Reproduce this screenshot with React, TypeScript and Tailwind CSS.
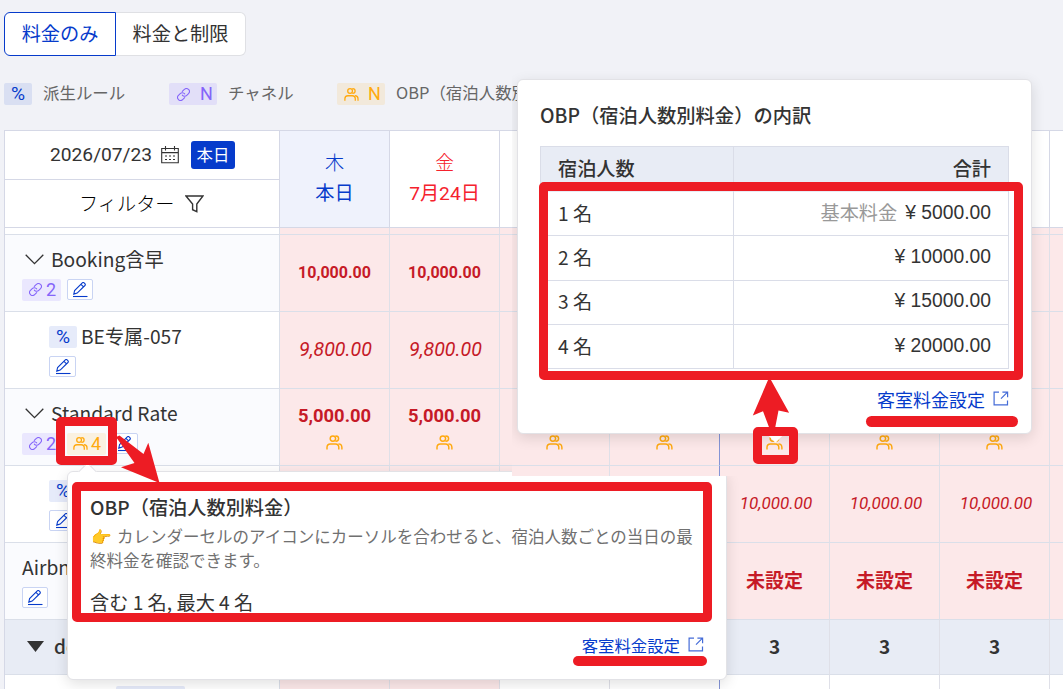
import type { ReactNode } from "react";
import { clsx } from "clsx";

const ROBOTO = "font-[Roboto,'Noto_Sans_CJK_JP',sans-serif]";

function PeopleIcon({ className = "w-[17px]" }: { className?: string }) {
  return (
    <svg height="15" viewBox="0 0 17 15" fill="none" stroke="currentColor" strokeWidth="1.45" className={clsx("shrink-0", className)}>
      <circle cx="6.9" cy="3.6" r="2.7" />
      <path d="M9.4 0.9h.5a2.7 2.7 0 0 1 0 5.4h-.5" />
      <path d="M1 14.6v-2.4a3.4 3.4 0 0 1 3.4-3.3h5a3.4 3.4 0 0 1 3.4 3.3v2.4" />
      <path d="M12.4 8.9a3.6 3.6 0 0 1 3.5 3.5v2.2" />
    </svg>
  );
}

function LinkIcon() {
  return (
    <svg width="13" height="13" viewBox="1 1 22 22" fill="none" stroke="currentColor" strokeWidth="1.8" strokeLinecap="round" className="shrink-0">
      <path d="M10 13a5 5 0 0 0 7.54.54l3-3a5 5 0 0 0-7.07-7.07l-3.5 3.4" />
      <path d="M14 11a5 5 0 0 0-7.54-.54l-3 3a5 5 0 0 0 7.07 7.07l3.5-3.4" />
    </svg>
  );
}

function ExternalIcon() {
  return (
    <svg width="16" height="16" viewBox="0 0 16 16" fill="none" stroke="currentColor" strokeWidth="1.2" className="opacity-75">
      <path d="M6 1.1H1.1v12.8h13.4V9.5" />
      <path d="M9.4 1.1h5.200v5.200M14.5 1.2L8 7.7" />
    </svg>
  );
}

function Chevron() {
  return (
    <svg width="19" height="11" viewBox="0 0 19 11" fill="none" stroke="#333" strokeWidth="1.3">
      <path d="M0.7 0.8L9.5 9.7l8.8-8.9" />
    </svg>
  );
}

function EditButton({ className = "w-[26px]" }: { className?: string }) {
  return (
    <span className={clsx("flex h-[21px] shrink-0 items-center justify-center rounded-[2px] border border-[#c9d4f3] bg-white text-[#063bcb]", className)}>
      <svg width="16" height="16" viewBox="0 0 16 16" fill="none" stroke="currentColor" strokeWidth="1.1">
        <path d="M1.8 12.1l.8-3.6L10.3 0.9a1.3 1.3 0 0 1 1.8 0l.8.8a1.3 1.3 0 0 1 0 1.8L5.200 11.1zM9 2.3l2.5 2.5" />
        <path d="M1 14.5h14.5" />
      </svg>
    </span>
  );
}

function PercentBadge() {
  return (
    <span className={clsx("flex h-[22px] w-7 shrink-0 items-center justify-center rounded-[2px] bg-[#063bcb]/10 text-[19.2px] text-[#063bcb]", ROBOTO)}>
      %
    </span>
  );
}

function ChannelBadge({ label, wide }: { label: string; wide?: boolean }) {
  return (
    <span
      className={clsx(
        "flex h-[22px] shrink-0 items-center rounded-[2px] bg-[#7b5cff]/12 text-[18px] leading-5 text-[#8464fa]",
        ROBOTO,
        wide ? "w-12 gap-[10px] pl-2" : "w-[39px] gap-1 pb-px pl-[7px]",
      )}
    >
      <LinkIcon />
      {label}
    </span>
  );
}

function ObpBadge({ label, wide }: { label: string; wide?: boolean }) {
  return (
    <span
      className={clsx(
        "flex h-[22px] shrink-0 items-center rounded-[2px] bg-[#ffaa0f]/12 text-[18px] leading-5 text-[#ffa90f]",
        ROBOTO,
        wide ? "w-12 gap-[9px] pl-[7px]" : "w-[39px] gap-[3px] pb-px pl-[6px]",
      )}
    >
      <PeopleIcon className="w-[15px]" />
      {label}
    </span>
  );
}

const COLUMNS = [0, 1, 2, 3, 4, 5, 6, 7];
const LAST_COLUMN = 7;

function Cells({ className, children }: { className: string; children?: ReactNode }) {
  return (
    <>
      {COLUMNS.map((col) => (
        <div
          key={col}
          className={clsx(
            "flex w-[110px] shrink-0 flex-col items-center border-r border-b border-b-[#dadfe9]",
            col === 3 ? "border-r-[#8494d6]" : "border-r-[#dfe0e8]",
            className,
          )}
        >
          {col < LAST_COLUMN && children}
        </div>
      ))}
    </>
  );
}

function Row({ label, labelClass, cellClass, height = "h-[77px]", children }: {
  label?: ReactNode;
  labelClass?: string;
  cellClass: string;
  height?: string;
  children?: ReactNode;
}) {
  return (
    <div className={clsx("flex", height)}>
      <div className={clsx("w-[275px] shrink-0 border-r border-b border-[#dadfe9]", labelClass)}>{label}</div>
      <Cells className={cellClass}>{children}</Cells>
    </div>
  );
}

function ParentLabel({ name, guests }: { name: string; guests?: string }) {
  return (
    <div className="pt-[10px] pl-[17px]">
      <div className="flex h-7 items-center gap-[7px] pl-[3px] text-[19.2px]">
        <Chevron />
        {name}
      </div>
      <div className="mt-[6px] flex items-start gap-[6px]">
        <ChannelBadge label="2" />
        {guests && <ObpBadge label={guests} />}
        <EditButton />
      </div>
    </div>
  );
}

function ChildLabel({ name }: { name: string }) {
  return (
    <div className="pt-[11px] pl-11">
      <div className="flex h-7 items-center gap-1 text-[19.2px]">
        <PercentBadge />
        <span className="-mt-[2px]">{name}</span>
      </div>
      <EditButton className="mt-[5px] w-[27px]" />
    </div>
  );
}

const DAYS = [
  { week: "木", date: "本日", color: "bg-[#eff2fc] text-[#063bcb]" },
  { week: "金", date: "7月24日", color: "bg-white text-[#f5222d]" },
  { week: "土", date: "7月25日", color: "bg-white text-[#f5222d]" },
  { week: "日", date: "7月26日", color: "bg-white text-[#f5222d]" },
  { week: "月", date: "7月27日", color: "bg-white text-[#333]" },
  { week: "火", date: "7月28日", color: "bg-white text-[#333]" },
  { week: "水", date: "7月29日", color: "bg-white text-[#333]" },
  { week: "", date: "", color: "bg-white" },
];

function TableHeader() {
  return (
    <div className="flex h-[97px]">
      <div className="w-[275px] shrink-0 border-r border-b border-[#d5d8e6] bg-white">
        <div className="flex h-[49px] items-center border-b border-[#d5d8e6] pl-[45px]">
          <span className={clsx("w-[111px] text-[19.2px]", ROBOTO)}>2026/07/23</span>
          <svg width="18" height="18" viewBox="0 0 18 18" fill="none" stroke="#333" strokeWidth="1.1">
            <path d="M0.7 2.5h16.6v14.3H0.7zM0.7 6.6h16.6M4.5 0v4.5M13.5 0v4.5" />
            <path d="M4 10h10M4 13.5h10" strokeDasharray="2 2" />
          </svg>
          <span className="ml-3 flex h-7 w-11 items-center justify-center rounded-[3px] bg-[#063bcb] pb-[2px] text-[16.4px] text-white">本日</span>
        </div>
        <div className="flex h-[47px] items-center pl-[74px] text-[19.2px] text-black">
          <span className="w-[106px] font-light">フィルター</span>
          <svg width="19" height="18" viewBox="0 0 19 18" fill="none" stroke="#333" strokeWidth="1.4">
            <path d="M1 1h17l-6.200 8v7.7l-4.200-2V9z" />
          </svg>
        </div>
      </div>
      {DAYS.map((day, i) => (
        <div
          key={i}
          className={clsx("flex w-[110px] shrink-0 flex-col items-center border-r border-b border-[#d5d8e6] pt-[17px] text-[19.2px] leading-[30px]", ROBOTO, day.color)}
        >
          <span className="pt-px font-light">{day.week}</span>
          <span>{day.date}</span>
        </div>
      ))}
    </div>
  );
}

function RateTable() {
  return (
    <div className="ml-1 w-[1200px] border-t border-l border-[#d5d8e6]">
      <TableHeader />
      <Row height="h-[7px]" labelClass="bg-white" cellClass="bg-[#fce8e9]" />
      <Row labelClass="bg-[#fafbfe]" cellClass="bg-[#fce8e9] justify-center" label={<ParentLabel name="Booking含早" />}>
        <span className={clsx("text-[16px] font-bold text-[#c61a27]", ROBOTO)}>10,000.00</span>
      </Row>
      <Row labelClass="bg-white" cellClass="bg-[#fce8e9] justify-center" label={<ChildLabel name="BE专属-057" />}>
        <span className={clsx("pl-[2px] text-[19.6px] text-[#c61a27] italic", ROBOTO)}>9,800.00</span>
      </Row>
      <Row labelClass="bg-[#fafbfe]" cellClass="bg-[#fce8e9]" label={<ParentLabel name="Standard Rate" guests="4" />}>
        <span className={clsx("mt-[13px] text-[18.4px] leading-[28px] font-bold text-[#c61a27]", ROBOTO)}>5,000.00</span>
        <PeopleIcon className="mt-[5px] w-[17px] text-[#ffa90f]" />
      </Row>
      <Row labelClass="bg-white" cellClass="bg-[#fce8e9] justify-center" label={<ChildLabel name="BE-Rate" />}>
        <span className={clsx("pl-[3px] text-[17px] text-[#c61a27] italic", ROBOTO)}>10,000.00</span>
      </Row>
      <Row
        labelClass="bg-[#fafbfe]"
        cellClass="bg-[#fce8e9] justify-center"
        label={
          <div className="pt-[10px] pl-[17px]">
            <div className="h-7 text-[19.2px] leading-7">Airbnb</div>
            <EditButton className="mt-[6px] w-[26px]" />
          </div>
        }
      >
        <span className="pb-[2px] text-[19px] font-bold text-[#c61a27]">未設定</span>
      </Row>
      <Row
        height="h-[55px]"
        labelClass="bg-[#e8ecf5]"
        cellClass="bg-[#e8ecf5] justify-center"
        label={
          <div className="flex h-full items-center gap-[10px] pb-[2px] pl-[22px] text-[19px] font-medium">
            <svg width="17" height="11" viewBox="0 0 17 11" fill="#333">
              <path d="M0 0h17L8.5 11z" />
            </svg>
            dorm
          </div>
        }
      >
        <span className="pb-[2px] text-[19px] font-bold">3</span>
      </Row>
      <div className="flex h-10">
        <div className="w-[275px] shrink-0 border-r border-[#dadfe9] bg-white">
          <div className="mt-[11px] ml-[111px] h-5 w-[69px] rounded-[2px] bg-[#e5eaf9]" />
        </div>
        {COLUMNS.map((col) => (
          <div
            key={col}
            className={clsx(
              "w-[110px] shrink-0 border-r",
              col < 2 ? "bg-[#fce8e9]" : "bg-white",
              col === 3 ? "border-[#8494d6]" : "border-[#dfe0e8]",
            )}
          />
        ))}
      </div>
    </div>
  );
}

// Popover opened from the guest count badge of a rate plan
function PlanPopover() {
  return (
    <div className="absolute top-[471px] left-[67px] h-[209px] w-[660px] rounded-md border border-[#e2e2e6] bg-white pt-[19px] pl-[22px] shadow-[0_4px_14px_rgba(0,0,0,0.12)] [clip-path:polygon(-20px_-20px,445px_-20px,445px_5px,690px_5px,690px_240px,-20px_240px)]">
      <span className="absolute -top-[7px] left-[13px] size-[13px] rotate-45 border-t border-l border-[#e2e2e6] bg-white" />
      <h3 className="text-[19.2px] leading-8 font-medium">OBP（宿泊人数別料金）</h3>
      <p className="mt-px text-[16.5px] leading-6 whitespace-nowrap text-[#707070]">
        <span className="inline-block w-[27px] pl-px">👉</span>
        カレンダーセルのアイコンにカーソルを合わせると、宿泊人数ごとの当日の最
        <br />
        終料金を確認できます。
      </p>
      <p className="mt-[14px] text-[19.2px] leading-8">含む 1 名, 最大 4 名</p>
      <div className="mt-[11px] mr-[22px] flex items-center justify-end gap-2 text-[16.4px] leading-8 text-[#063bcb]">
        客室料金設定
        <ExternalIcon />
      </div>
    </div>
  );
}

const GUEST_PRICES = [
  { guests: "1 名", price: "5000.00", base: true },
  { guests: "2 名", price: "10000.00" },
  { guests: "3 名", price: "15000.00" },
  { guests: "4 名", price: "20000.00" },
];

// Popover opened from the people icon inside a calendar cell
function BreakdownPopover() {
  return (
    <div className="absolute top-[79px] left-[517px] h-[355px] w-[515px] rounded-md border border-[#e2e2e6] bg-white pt-[19px] pl-[22px] shadow-[0_4px_14px_rgba(0,0,0,0.12)] [clip-path:inset(-20px_-20px_-30px_-5px)]">
      <span className="absolute -bottom-[7px] left-[251px] size-[13px] rotate-45 bg-white" />
      <h3 className="text-[19.3px] leading-8 font-medium">OBP（宿泊人数別料金）の内訳</h3>
      <div className="mt-[15px] w-[469px] border-t border-l border-[#dadde8] text-[19.2px]">
        <div className="flex h-[45px] bg-[#e8ecf5] font-medium">
          <span className="flex w-[193px] items-center border-r border-[#dadde8] pb-[3px] pl-[17px]">宿泊人数</span>
          <span className="flex flex-1 items-center justify-end border-r border-[#dadde8] pr-[17px] pb-[3px]">合計</span>
        </div>
        {GUEST_PRICES.map((row) => (
          <div key={row.guests} className="flex h-[44.3px] border-b border-[#dadde8]">
            <span className="flex w-[193px] items-center border-r border-[#dadde8] pb-px pl-[17px]">{row.guests}</span>
            <span className="flex flex-1 items-center justify-end gap-2 border-r border-[#dadde8] pr-[17px]">
              {row.base && <span className="-mt-[3px] text-[#999]">基本料金</span>}
              <span className="-mt-px font-['Liberation_Sans',sans-serif] text-[19.3px]">¥ {row.price}</span>
            </span>
          </div>
        ))}
      </div>
      <div className="mt-[14px] mr-[22px] flex items-center justify-end gap-2 text-[18px] leading-8 text-[#063bcb]">
        客室料金設定
        <ExternalIcon />
      </div>
    </div>
  );
}

function Callouts() {
  return (
    <>
      <div className="absolute top-[417px] left-[56px] h-12 w-[61px] rounded-[5px] border-[9px] border-[#ed1c24]" />
      <div className="absolute top-[482px] left-[72px] h-[140px] w-[640px] rounded-[5px] border-[9px] border-[#ed1c24]" />
      <div className="absolute top-[182px] left-[539px] h-[198px] w-[484px] rounded-[5px] border-[9px] border-[#ed1c24]" />
      <div className="absolute top-[427px] left-[753px] h-[37px] w-[45px] rounded-[5px] border-[9px] border-[#ed1c24]" />
      <div className="absolute top-[416px] left-[866px] h-[11px] w-[152px] rounded-full bg-[#ed1c24]" />
      <div className="absolute top-[656px] left-[573px] h-[10px] w-[134px] rounded-full bg-[#ed1c24]" />
      <svg className="absolute top-0 left-0" width="1063" height="689" fill="#ed1c24">
        <path d="M116 437l3.5-1.5 24 18.5 4.8-11.3L159.5 483 121 467.3l13.5-4.3z" />
        <path d="M769.3 377l19.8 35.8-10.6-2.3-3.5 18h-5.5L763 411.3l-10.200 4.3z" />
      </svg>
    </>
  );
}

export default function App() {
  return (
    <div className="relative h-[689px] w-[1063px] overflow-hidden bg-[#f1f2f7] font-['Noto_Sans_CJK_JP',sans-serif] text-[#333]">
      <div className="flex h-[56px] pt-3 pl-1 text-[19.2px]">
        <span className="flex w-28 items-center justify-center rounded-l-md border border-[#063bcb] bg-white pb-[2px] text-[#063bcb]">料金のみ</span>
        <span className="flex w-[130px] items-center justify-center rounded-r-md border border-l-0 border-[#dfe0e4] bg-white pb-[2px]">料金と制限</span>
      </div>
      <div className="flex h-[74px] items-start pt-[27px] pl-1 text-[16.45px] leading-5 whitespace-nowrap text-[#666]">
        <PercentBadge />
        <span className="-mt-px ml-[11px] w-[126px]">派生ルール</span>
        <ChannelBadge label="N" wide />
        <span className="-mt-px ml-[11px] w-[109px]">チャネル</span>
        <ObpBadge label="N" wide />
        <span className="-mt-px ml-[11px]">OBP（宿泊人数別料金）</span>
      </div>
      <RateTable />
      <PlanPopover />
      <BreakdownPopover />
      <Callouts />
    </div>
  );
}
